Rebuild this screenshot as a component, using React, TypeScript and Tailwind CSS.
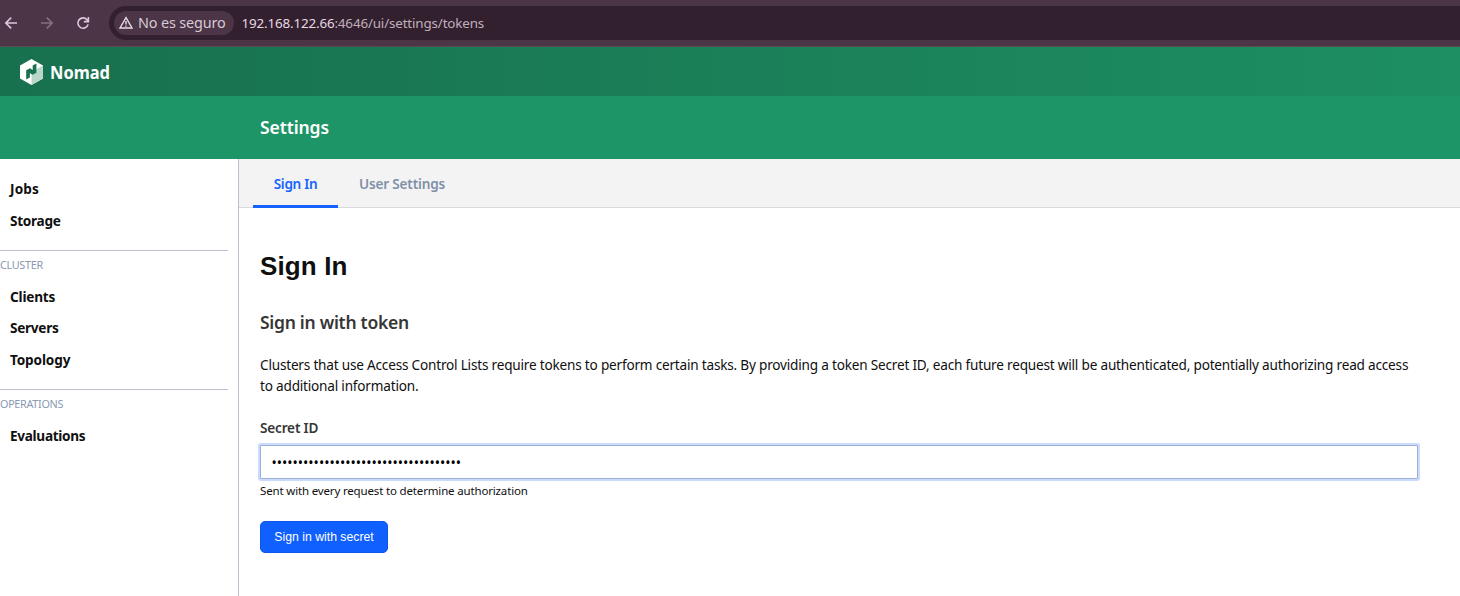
import type { ReactNode } from "react";

function BrowserBar() {
  return (
    <div className="flex h-[47px] shrink-0 border-b border-[#5a4a55] bg-[#4b3547] pt-[6px]">
      <div className="flex h-[34px] w-[109px] shrink-0 items-center">
        <svg className="ml-[3px] shrink-0" width="16" height="16" viewBox="0 0 16 16" fill="none" stroke="#e3c6dc" strokeWidth="1.6">
          <path d="M14 8H3M8.2 2.6 2.8 8l5.4 5.4" />
        </svg>
        <svg className="ml-[20px] shrink-0" width="16" height="16" viewBox="0 0 16 16" fill="none" stroke="#86707f" strokeWidth="1.6">
          <path d="M2 8h11M7.8 2.6 13.2 8l-5.4 5.4" />
        </svg>
        <svg className="ml-[20px] shrink-0" width="16" height="16" viewBox="0 0 16 16" fill="none" stroke="#e3c6dc" strokeWidth="1.6">
          <path d="M13.1 9.4A5.2 5.2 0 1 1 12.3 5l.9 1.1M13.4 2v4.6H8.8" />
        </svg>
      </div>
      <div className="flex h-[34px] flex-1 items-center rounded-l-full bg-[#33202f] pl-[5px]">
        <div className="flex h-6 w-[120px] shrink-0 items-center rounded-full bg-[#4b3547] pl-[4px]">
          <svg width="16" height="16" viewBox="0 0 16 16" fill="none" stroke="#e6dbe3" strokeWidth="1.4">
            <path d="M8 2.7 14 13H2z" />
            <path d="M8 6v3.6M8 10.4v1.4" />
          </svg>
          <span className="ml-[4px] whitespace-nowrap text-[14.4px] tracking-[-0.13px] text-[#d9cad5]">No es seguro</span>
        </div>
        <span className="ml-[7.5px] whitespace-nowrap text-[13.4px] tracking-[-0.15px] text-[#c0afbb]">
          <span className="text-[#e6d9e2]">192.168.122.66</span>:4646/ui/settings/tokens
        </span>
      </div>
    </div>
  );
}

function NomadLogo() {
  return (
    <svg width="24" height="26" viewBox="0 0 24 26">
      <path d="M11.5 0 23 6.5v13L11.5 26 0 19.5V6.5z" fill="#fff" />
      <path d="M23 6.5v13L11.5 26V13z" fill="#b9d6ca" />
      <path d="M6.2 11.2 10 9.2l2.7 1.8V6.6l3.7-2v9.2l-3.7 2-2.8-1.5v4.3l-3.7 1.8z" fill="#18724f" />
    </svg>
  );
}

function NavItem({ className, children }: { className: string; children: ReactNode }) {
  return (
    <a className={`block h-[31px] pl-[10px] text-[13.6px] font-bold leading-[31px] text-[#0f0f10] ${className}`}>{children}</a>
  );
}

function NavLabel({ className, children }: { className: string; children: ReactNode }) {
  return (
    <div className={`mt-[6px] h-[15px] text-[10.8px] leading-[15px] text-[#8a99b2] ${className}`}>{children}</div>
  );
}

function Sidebar() {
  return (
    <nav className="w-[239px] shrink-0 border-r border-[#bac1cc] pt-[14px]">
      <NavItem className="tracking-[0.15px]">Jobs</NavItem>
      <NavItem className="mt-px tracking-[-0.29px]">Storage</NavItem>
      <div className="mt-[14px] mr-[10px] h-px bg-[#bac1cc]" />
      <NavLabel className="tracking-[-0.3px]">CLUSTER</NavLabel>
      <NavItem className="mt-[9px] tracking-[-0.2px]">Clients</NavItem>
      <NavItem className="tracking-[-0.27px]">Servers</NavItem>
      <NavItem className="mt-px tracking-[-0.14px]">Topology</NavItem>
      <div className="mt-[14px] mr-[10px] h-px bg-[#bac1cc]" />
      <NavLabel className="tracking-[-0.3px]">OPERATIONS</NavLabel>
      <NavItem className="mt-[9px] tracking-[-0.3px]">Evaluations</NavItem>
    </nav>
  );
}

function Tabs() {
  return (
    <div className="flex h-[49px] border-b border-[#d9dadd] bg-[#f3f3f3] pl-[14px] text-[13.6px] font-semibold leading-[31px]">
      <a className="h-[49px] w-[85px] border-b-[3px] border-[#1563ff] pt-[9px] text-center tracking-[-0.3px] text-[#1563ff]">Sign In</a>
      <a className="ml-[21px] h-[49px] pt-[9px] tracking-[-0.19px] text-[#8190a8]">User Settings</a>
    </div>
  );
}

function SignIn() {
  return (
    <div className="px-[21px] pt-[43px]">
      <h1 className="h-[30px] font-['Liberation_Sans',sans-serif] text-[26px] font-bold leading-[30px] tracking-[0.12px] text-[#0f0f10]">Sign In</h1>
      <h2 className="mt-[29px] h-6 text-[17.5px] font-semibold leading-6 tracking-[-0.28px] text-[#363636]">Sign in with token</h2>
      <p className="mt-[20px] text-[13.6px] leading-[21px] tracking-[-0.204px] text-[#0f0f10]">
        Clusters that use Access Control Lists require tokens to perform certain tasks. By providing a token Secret ID, each future request will be authenticated, potentially authorizing read access
        <br />
        to additional information.
      </p>
      <label className="mt-[22px] block h-[19px] text-[13.6px] font-semibold leading-[19px] tracking-[-0.19px] text-[#363636]">Secret ID</label>
      <div className="mt-[8px] flex h-[34px] w-[1158px] items-center rounded-[1px] border border-[#9fb0d3] bg-white pl-[10.5px] pt-[2px] text-[14px] leading-none text-black shadow-[0_0_0_2px_#c9dbff]">
        {"•".repeat(36)}
      </div>
      <p className="mt-[4px] h-[15px] text-[11.5px] leading-[15px] tracking-[-0.16px] text-[#0f0f10]">Sent with every request to determine authorization</p>
      <button className="mt-[23px] block h-8 w-32 rounded-[5px] border border-[#0c56e9] bg-[#1060ff] font-['Liberation_Sans',sans-serif] text-[12.25px] text-white">
        Sign in with secret
      </button>
    </div>
  );
}

export default function App() {
  return (
    <div className="flex h-[596px] w-[1460px] flex-col overflow-hidden bg-white font-['Noto_Sans',sans-serif]">
      <BrowserBar />
      <header className="flex h-[49px] shrink-0 items-center bg-linear-to-r from-[#18704e] to-[#1d8f62] pl-5">
        <NomadLogo />
        <span className="ml-[6px] origin-left scale-x-[0.89] text-[18.5px] font-bold leading-6 text-white">Nomad</span>
      </header>
      <div className="h-[63px] shrink-0 bg-[#1e9567] pl-[260px] pt-[19px]">
        <div className="h-6 text-[17.5px] font-semibold leading-6 tracking-[-0.1px] text-white">Settings</div>
      </div>
      <div className="flex min-h-0 flex-1">
        <Sidebar />
        <main className="min-w-0 flex-1">
          <Tabs />
          <SignIn />
        </main>
      </div>
    </div>
  );
}
